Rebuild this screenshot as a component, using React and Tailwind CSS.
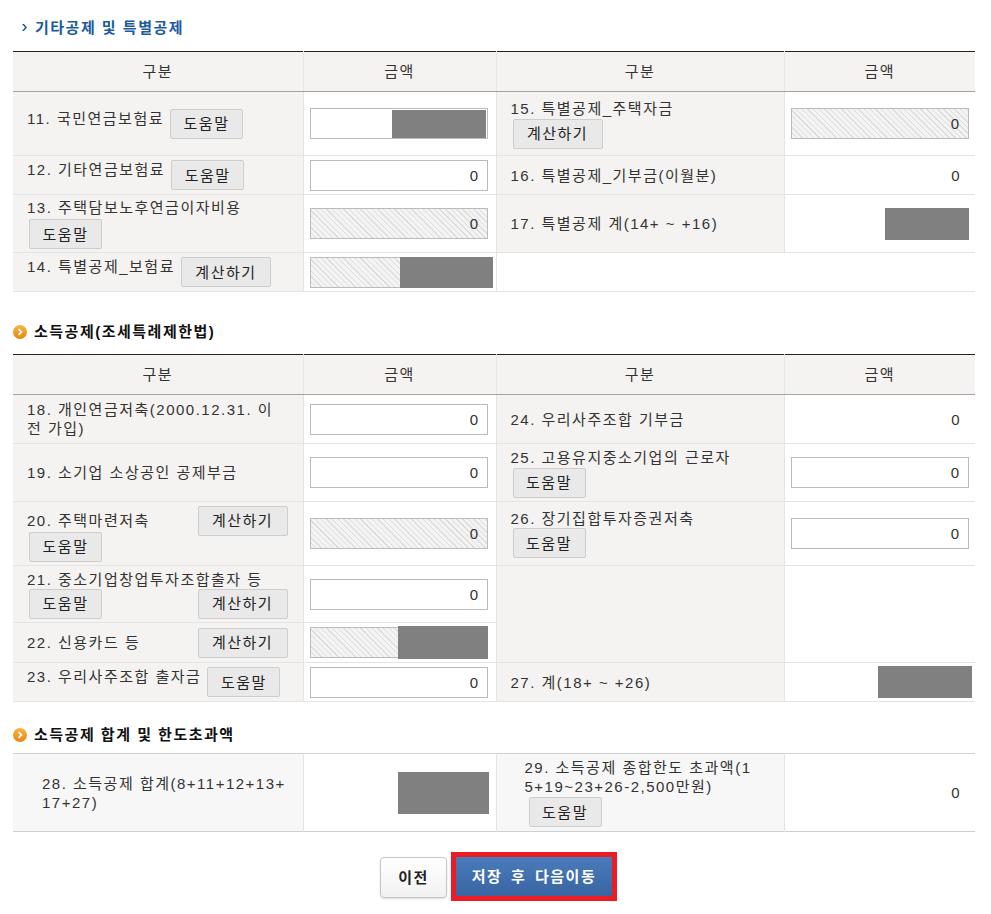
import React from 'react';

const hatch =
  'bg-[repeating-linear-gradient(45deg,#f3f3f3_0px,#f3f3f3_3px,#dddddd_3px,#dddddd_4px)]';

const HelpBtn = ({ className = '' }) => (
  <button className={`w-[73px] h-[30px] shrink-0 rounded-[2px] border border-[#cdcdcd] bg-[#e9e9e9] text-[#222] ${className}`}>
    도움말
  </button>
);

const CalcBtn = ({ className = '' }) => (
  <button className={`w-[90px] h-[30px] shrink-0 rounded-[2px] border border-[#cdcdcd] bg-[#e9e9e9] text-[#222] ${className}`}>
    계산하기
  </button>
);

// amount box, optionally hatched (readonly) and with a gray cover block
const Amount = ({ value = '0', hatched = false, cover = null }) => (
  <div className="relative w-[178px] h-[31px]">
    <input
      readOnly
      value={value}
      className={`w-full h-full border border-[#bbbbbb] text-right pr-[7px] text-[#333] outline-none ${hatched ? hatch : 'bg-white'}`}
    />
    {cover}
  </div>
);

const SectionTitle = ({ children }) => (
  <h2 className="flex items-center gap-[7px] font-bold text-[#111]">
    <svg width="14" height="14" viewBox="0 0 14 14">
      <defs>
        <linearGradient id="og" x1="0" y1="0" x2="0" y2="1">
          <stop offset="0" stopColor="#fbb546" />
          <stop offset="1" stopColor="#e8840c" />
        </linearGradient>
      </defs>
      <circle cx="7" cy="7" r="7" fill="url(#og)" />
      <path d="M5.6 4.2 L8.4 7 L5.6 9.8" stroke="#fff" strokeWidth="1.8" fill="none" />
    </svg>
    {children}
  </h2>
);

const Label = ({ children, className = '', rowSpan }) => (
  <td rowSpan={rowSpan} className={`bg-[#f4f3f1] pl-[14px] pr-[15px] border-b border-r border-[#e4e4e4] ${className}`}>{children}</td>
);

const Cell = ({ children, className = '', rowSpan }) => (
  <td rowSpan={rowSpan} className={`bg-white pl-[6px] border-b border-r border-[#e4e4e4] ${className}`}>{children}</td>
);

const Head = () => (
  <thead>
    <tr className="h-[40px] bg-[#f4f3f1]">
      <th className="font-normal border-b border-r border-b-[#a3a3a3] border-r-[#e8e8e8]">구분</th>
      <th className="font-normal border-b border-r border-b-[#a3a3a3] border-r-[#e8e8e8]">금액</th>
      <th className="font-normal border-b border-r border-b-[#a3a3a3] border-r-[#e8e8e8]">구분</th>
      <th className="font-normal border-b border-b-[#a3a3a3]">금액</th>
    </tr>
  </thead>
);

const Cols = () => (
  <colgroup>
    <col className="w-[290px]" />
    <col className="w-[193px]" />
    <col className="w-[288px]" />
    <col className="w-[191px]" />
  </colgroup>
);

export default function App() {
  return (
    <div className="min-h-[914px] bg-white [font-family:'Liberation_Sans','Noto_Sans_CJK_KR',sans-serif] text-[15px] leading-[19px] tracking-[1.5px] text-[#333]">
      <div className="ml-[13px] w-[962px] pt-[18px] pb-[13px]">
        {/* 기타공제 및 특별공제 */}
        <h2 className="flex items-center gap-[8px] pl-[9px] font-bold text-[#1b5b9d]">
          <svg width="5" height="7" viewBox="0 0 5 7">
            <path d="M0 0 L2 0 L5 3.5 L2 7 L0 7 L3 3.5 Z" fill="#1b5b9d" />
          </svg>
          기타공제 및 특별공제
        </h2>

        <table className="mt-[14px] w-[962px] table-fixed border-collapse border-t border-t-[#222]">
          <Cols />
          <Head />
          <tbody>
            <tr className="h-[64px]">
              <Label>
                <div className="flex items-start gap-[6px]">
                  <span className="whitespace-nowrap">11. 국민연금보험료</span>
                  <HelpBtn />
                </div>
              </Label>
              <Cell>
                <Amount value="" cover={<div className="absolute top-[2px] bottom-[1px] right-[2px] w-[94px] bg-[#808080]" />} />
              </Cell>
              <Label>
                <div className="flex flex-col items-start gap-[1px]">
                  <span className="whitespace-nowrap">15. 특별공제_주택자금</span>
                  <CalcBtn className="ml-[2px]" />
                </div>
              </Label>
              <Cell className="border-r-0">
                <Amount hatched />
              </Cell>
            </tr>
            <tr className="h-[39px]">
              <Label>
                <div className="flex items-start gap-[6px]">
                  <span className="whitespace-nowrap">12. 기타연금보험료</span>
                  <HelpBtn />
                </div>
              </Label>
              <Cell>
                <Amount />
              </Cell>
              <Label>
                <span className="whitespace-nowrap">16. 특별공제_기부금(이월분)</span>
              </Label>
              <Cell className="border-r-0 text-right pr-[14px]">0</Cell>
            </tr>
            <tr className="h-[58px]">
              <Label>
                <div className="flex flex-col items-start gap-[2px]">
                  <span className="whitespace-nowrap">13. 주택담보노후연금이자비용</span>
                  <HelpBtn className="ml-[2px]" />
                </div>
              </Label>
              <Cell>
                <Amount hatched />
              </Cell>
              <Label>
                <span className="whitespace-nowrap">17. 특별공제 계(14+ ~ +16)</span>
              </Label>
              <Cell className="border-r-0">
                <div className="ml-auto mr-[6px] w-[84px] h-[32px] bg-[#808080]" />
              </Cell>
            </tr>
            <tr className="h-[39px]">
              <Label>
                <div className="flex items-start gap-[6px]">
                  <span className="whitespace-nowrap">14. 특별공제_보험료</span>
                  <CalcBtn />
                </div>
              </Label>
              <Cell>
                <Amount hatched cover={<div className="absolute top-0 bottom-0 left-[90px] right-[-5px] bg-[#808080]" />} />
              </Cell>
              <td className="bg-white border-b border-[#e4e4e4]" colSpan={2}></td>
            </tr>
          </tbody>
        </table>

        {/* 소득공제(조세특례제한법) */}
        <div className="mt-[30px]">
          <SectionTitle>소득공제(조세특례제한법)</SectionTitle>
        </div>

        <table className="mt-[13px] w-[962px] table-fixed border-collapse border-t border-t-[#222]">
          <Cols />
          <Head />
          <tbody>
            <tr className="h-[49px]">
              <Label>
                <div className="whitespace-nowrap">
                  18. 개인연금저축(2000.12.31. 이
                  <br />
                  전 가입)
                </div>
              </Label>
              <Cell>
                <Amount />
              </Cell>
              <Label>
                <span className="whitespace-nowrap">24. 우리사주조합 기부금</span>
              </Label>
              <Cell className="border-r-0 text-right pr-[14px]">0</Cell>
            </tr>
            <tr className="h-[58px]">
              <Label>
                <span className="whitespace-nowrap">19. 소기업 소상공인 공제부금</span>
              </Label>
              <Cell>
                <Amount />
              </Cell>
              <Label>
                <div className="flex flex-col items-start gap-[1px]">
                  <span className="whitespace-nowrap">25. 고용유지중소기업의 근로자</span>
                  <HelpBtn className="ml-[2px]" />
                </div>
              </Label>
              <Cell className="border-r-0">
                <Amount />
              </Cell>
            </tr>
            <tr className="h-[64px]">
              <Label>
                <div className="flex flex-col items-start">
                  <div className="flex w-full h-[30px] items-center justify-between">
                    <span className="whitespace-nowrap">20. 주택마련저축</span>
                    <CalcBtn />
                  </div>
                  <HelpBtn className="-mt-[4px] ml-[2px]" />
                </div>
              </Label>
              <Cell>
                <Amount hatched />
              </Cell>
              <Label>
                <div className="flex flex-col items-start">
                  <span className="whitespace-nowrap">26. 장기집합투자증권저축</span>
                  <HelpBtn className="ml-[2px]" />
                </div>
              </Label>
              <Cell className="border-r-0">
                <Amount />
              </Cell>
            </tr>
            <tr className="h-[57px]">
              <Label>
                <div className="flex flex-col">
                  <span className="whitespace-nowrap">21. 중소기업창업투자조합출자 등</span>
                  <div className="flex items-center justify-between">
                    <HelpBtn className="ml-[2px]" />
                    <CalcBtn />
                  </div>
                </div>
              </Label>
              <Cell>
                <Amount />
              </Cell>
              <Label rowSpan={2} />
              <Cell rowSpan={2} className="border-r-0" />
            </tr>
            <tr className="h-[40px]">
              <Label>
                <div className="flex items-center justify-between">
                  <span className="whitespace-nowrap">22. 신용카드 등</span>
                  <CalcBtn />
                </div>
              </Label>
              <Cell>
                <Amount hatched cover={<div className="absolute top-[-1px] bottom-[-1px] left-[88px] right-0 bg-[#808080]" />} />
              </Cell>
            </tr>
            <tr className="h-[39px]">
              <Label>
                <div className="flex items-start gap-[6px]">
                  <span className="whitespace-nowrap">23. 우리사주조합 출자금</span>
                  <HelpBtn />
                </div>
              </Label>
              <Cell>
                <Amount />
              </Cell>
              <Label>
                <span className="whitespace-nowrap">27. 계(18+ ~ +26)</span>
              </Label>
              <Cell className="border-r-0">
                <div className="ml-auto mr-[3px] w-[94px] h-[32px] bg-[#808080]" />
              </Cell>
            </tr>
          </tbody>
        </table>

        {/* 소득공제 합계 및 한도초과액 */}
        <div className="mt-[23px]">
          <SectionTitle>소득공제 합계 및 한도초과액</SectionTitle>
        </div>

        <table className="mt-[9px] w-[962px] table-fixed border-collapse border-y border-[#d0d0d0]">
          <Cols />
          <tbody>
            <tr className="h-[78px]">
              <td className="bg-[#f7f7f7] pl-[29px] border-r border-[#e4e4e4]">
                <div className="whitespace-nowrap">
                  28. 소득공제 합계(8+11+12+13+
                  <br />
                  17+27)
                </div>
              </td>
              <td className="bg-white border-r border-[#e4e4e4]">
                <div className="ml-auto mr-[7px] w-[91px] h-[42px] bg-[#808080]" />
              </td>
              <td className="bg-[#f7f7f7] pl-[28px] border-r border-[#e4e4e4]">
                <div className="flex flex-col items-start">
                  <span className="whitespace-nowrap">29. 소득공제 종합한도 초과액(1</span>
                  <span className="whitespace-nowrap">5+19~23+26-2,500만원)</span>
                  <HelpBtn className="ml-[4px] mt-[1px]" />
                </div>
              </td>
              <td className="bg-white text-right pr-[14px]">0</td>
            </tr>
          </tbody>
        </table>

        {/* buttons */}
        <div className="mt-[20px] flex items-start justify-center gap-[4px] pl-[9px]">
          <button className="mt-[5px] w-[67px] h-[41px] rounded-[4px] border border-[#c6c6c6] bg-[linear-gradient(#ffffff,#f1f1f1)] font-bold text-[#222] shadow-[0_1px_2px_rgba(0,0,0,0.15)]">
            이전
          </button>
          <div className="border-[5px] border-[#ec1c24]">
            <button className="w-[156px] h-[39px] bg-[linear-gradient(#4a7bba,#3965a2)] font-bold text-white [word-spacing:3px]">
              저장 후 다음이동
            </button>
          </div>
        </div>
      </div>
    </div>
  );
}
